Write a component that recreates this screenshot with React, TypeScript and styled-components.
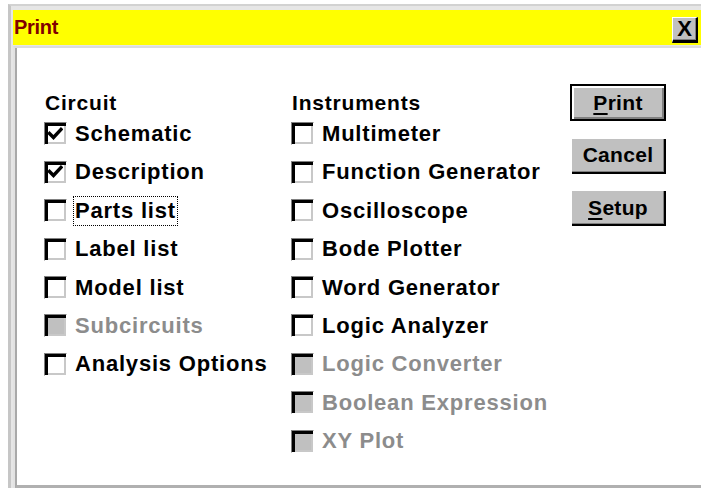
import React from 'react';
import styled, { createGlobalStyle } from 'styled-components';

const Global = createGlobalStyle`
  html, body { margin: 0; padding: 0; background: #ffffff; }
  body {
    width: 701px; height: 488px; overflow: hidden;
    font-family: "Liberation Sans", Arial, sans-serif;
  }
  * { box-sizing: border-box; }
`;

const Window = styled.div`
  margin: 4px 0 0 8px;
  height: 484px;
  border-left: 3px solid #c6c6c6;
  border-top: 2px solid #d2d2d2;
  background: #e6e6e6;
  padding: 4px 0 0 2px;
  display: flex;
  flex-direction: column;
`;

const TitleBar = styled.div`
  height: 35px;
  background: #ffff00;
  display: flex;
  align-items: center;
  justify-content: space-between;
  padding-left: 1px;
`;

const TitleText = styled.span`
  color: #800000;
  font-weight: bold;
  font-size: 20px;
  letter-spacing: -0.3px;
`;

const CloseButton = styled.div`
  width: 26px;
  height: 26px;
  margin-right: 3px;
  margin-top: 4px;
  background: #c0c0c0;
  border-top: 1px solid #ffffff;
  border-left: 1px solid #ffffff;
  border-right: 2px solid #000000;
  border-bottom: 3px solid #000000;
  box-shadow: inset -1px -1px 0 #808080;
  display: flex;
  align-items: center;
  justify-content: center;
  font-weight: bold;
  font-size: 22px;
  color: #000;
  line-height: 1;
`;

const Client = styled.div`
  flex: 1;
  margin-top: 1px;
  border-top: 2px solid #dcdcdc;
  border-left: 2px solid #e2e2e2;
  display: flex;
`;

const Inner = styled.div`
  flex: 1;
  background: #ffffff;
  border-left: 2px solid #a9a9a9;
  border-bottom: 3px solid #b0b0b0;
  padding: 36px 0 0 27px;
  display: flex;
  align-items: flex-start;
`;

const Column = styled.div<{ $w: number }>`
  width: ${(p) => p.$w}px;
  padding-top: 8px;
  display: flex;
  flex-direction: column;
`;

const Heading = styled.div`
  height: 22.8px;
  font-size: 21px;
  font-weight: bold;
  line-height: 22px;
  color: #000;
  padding-left: 1px;
  letter-spacing: 0.8px;
`;

const Row = styled.div`
  height: 38.4px;
  display: flex;
  align-items: center;
  gap: 7px;
`;

const Box = styled.div<{ $disabled?: boolean }>`
  width: 23px;
  height: 23px;
  flex: none;
  border-top: 1px solid #808080;
  border-left: 1px solid #808080;
  border-right: 1px solid #ffffff;
  border-bottom: 1px solid #ffffff;
  box-shadow: inset 3px 3px 0 #000000, inset -2px -2px 0 #c8c8c8;
  background: ${(p) => (p.$disabled ? '#c0c0c0' : '#ffffff')};
  display: flex;
  align-items: center;
  justify-content: center;
`;

const Label = styled.span<{ $disabled?: boolean; $focus?: boolean }>`
  font-size: 22px;
  font-weight: bold;
  line-height: 24px;
  letter-spacing: 0.8px;
  color: ${(p) => (p.$disabled ? '#8c8c8c' : '#000000')};
  padding: 2px 1px;
  margin-left: -1px;
  border: 1px dotted ${(p) => (p.$focus ? '#000' : 'transparent')};
  white-space: nowrap;
`;

const ButtonCol = styled.div`
  display: flex;
  flex-direction: column;
  gap: 15.5px;
`;

const Button = styled.div<{ $default?: boolean }>`
  width: 96px;
  height: 37px;
  background: #c0c0c0;
  border: ${(p) => (p.$default ? '2px solid #000' : 'none')};
  box-shadow: ${(p) =>
    p.$default
      ? 'inset 2px 2px 0 #ffffff, inset -2px -2px 0 #808080'
      : 'inset 2px 2px 0 #ffffff, inset -2px -2px 0 #000000, inset -3px -3px 0 #808080'};
  display: flex;
  align-items: center;
  justify-content: center;
  font-size: 21px;
  font-weight: bold;
  color: #000;
  letter-spacing: 0.3px;
  u { text-decoration-thickness: 2px; text-underline-offset: 3px; }
`;

const Check = () => (
  <svg width="15" height="14" viewBox="0 0 15 14">
    <path d="M1.5 6.5 L5.5 10.5 L13 2.5" fill="none" stroke="#000" strokeWidth="3.4" strokeLinecap="square" />
  </svg>
);

type Item = { label: string; checked?: boolean; disabled?: boolean; focus?: boolean };

const circuit: Item[] = [
  { label: 'Schematic', checked: true },
  { label: 'Description', checked: true },
  { label: 'Parts list', focus: true },
  { label: 'Label list' },
  { label: 'Model list' },
  { label: 'Subcircuits', disabled: true },
  { label: 'Analysis Options' },
];

const instruments: Item[] = [
  { label: 'Multimeter' },
  { label: 'Function Generator' },
  { label: 'Oscilloscope' },
  { label: 'Bode Plotter' },
  { label: 'Word Generator' },
  { label: 'Logic Analyzer' },
  { label: 'Logic Converter', disabled: true },
  { label: 'Boolean Expression', disabled: true },
  { label: 'XY Plot', disabled: true },
];

const CheckRow = ({ item }: { item: Item }) => (
  <Row>
    <Box $disabled={item.disabled}>{item.checked && <Check />}</Box>
    <Label $disabled={item.disabled} $focus={item.focus}>{item.label}</Label>
  </Row>
);

export default function App() {
  return (
    <>
      <Global />
      <Window>
        <TitleBar>
          <TitleText>Print</TitleText>
          <CloseButton>X</CloseButton>
        </TitleBar>
        <Client>
          <Inner>
            <Column $w={247}>
              <Heading>Circuit</Heading>
              {circuit.map((it) => (
                <CheckRow key={it.label} item={it} />
              ))}
            </Column>
            <Column $w={279}>
              <Heading>Instruments</Heading>
              {instruments.map((it) => (
                <CheckRow key={it.label} item={it} />
              ))}
            </Column>
            <ButtonCol>
              <Button $default>
                <span><u>P</u>rint</span>
              </Button>
              <Button>Cancel</Button>
              <Button>
                <span><u>S</u>etup</span>
              </Button>
            </ButtonCol>
          </Inner>
        </Client>
      </Window>
    </>
  );
}
